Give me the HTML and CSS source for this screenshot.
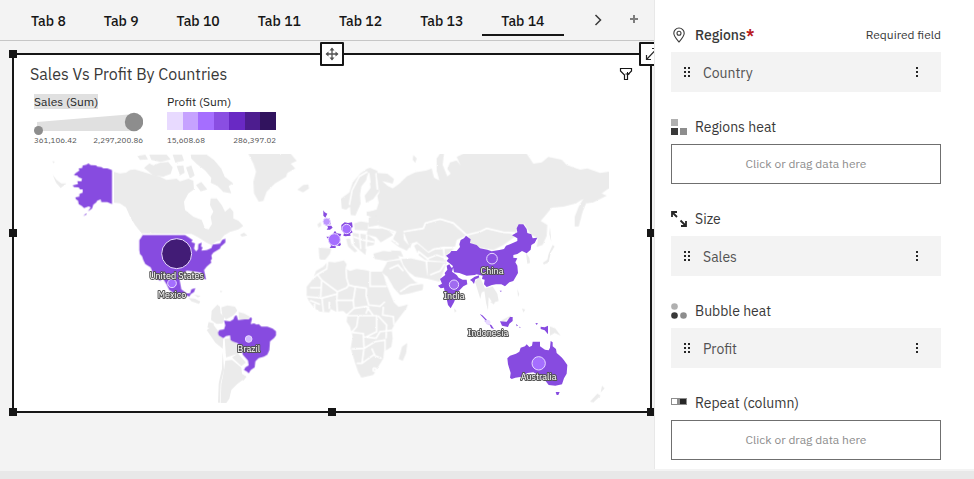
FILE: index.html
```html
<!DOCTYPE html>
<html lang="en">
<head>
<meta charset="utf-8">
<title>Sales Vs Profit By Countries</title>
<link rel="stylesheet" href="styles.css">
</head>
<body>
<main class="workspace">
  <section class="canvas">
    <nav class="tabbar" aria-label="Tabs">
      <div class="tabs">
        <button class="tab">Tab 8</button>
        <button class="tab">Tab 9</button>
        <button class="tab">Tab 10</button>
        <button class="tab">Tab 11</button>
        <button class="tab">Tab 12</button>
        <button class="tab">Tab 13</button>
        <button class="tab tab-active">Tab 14</button>
      </div>
      <button class="tab-icon" aria-label="Next tabs"><svg width="16" height="16" viewBox="0 0 16 16"><path d="M5.500 3l5 5-5 5" fill="none" stroke="#393939" stroke-width="1.500"/></svg></button>
      <button class="tab-icon tab-add" aria-label="Add tab"><svg width="16" height="16" viewBox="0 0 16 16"><path d="M8 4v8M4 8h8" fill="none" stroke="#7d7d7d" stroke-width="2"/></svg></button>
    </nav>

    <article class="widget">
      <button class="grip grip-move" aria-label="Move"><svg width="14" height="14" viewBox="0 0 14 14"><path d="M7 1.500v11M1.500 7h11" stroke="#525252" stroke-width="1.300" fill="none"/><path d="M7 .5L9.500 3.500h-5zM7 13.500l2.500-3h-5zM.5 7l3-2.500v5zM13.500 7l-3-2.500v5z" fill="#525252"/></svg></button>
      <button class="grip grip-expand" aria-label="Expand"><svg width="16" height="16" viewBox="0 0 16 16"><path d="M3.500 9v4.500H8M4 13L13.500 3M9 2.500h5v5" stroke="#262626" stroke-width="1.200" fill="none"/></svg></button>
      <span class="handle handle-tl"></span><span class="handle handle-ml"></span><span class="handle handle-bl"></span>
      <span class="handle handle-bc"></span><span class="handle handle-mr"></span><span class="handle handle-br"></span>

      <header class="widget-head">
        <h1>Sales Vs Profit By Countries</h1>
        <button class="filter" aria-label="Filter"><svg width="14" height="14" viewBox="0 0 14 14"><path d="M1.500 1.500h11v2.500L8.500 8v4.500h-3V8L1.500 4z" fill="none" stroke="#161616" stroke-width="1.200"/><path d="M8.500 5v4M6.500 7h4" stroke="#161616" fill="none"/></svg></button>
      </header>

      <div class="legends">
        <section class="legend">
          <h2><span class="marked">Sales (Sum)</span></h2>
          <svg class="legend-art" viewBox="0 0 109 24" aria-hidden="true"><path d="M3 10L100 2v17H3z" fill="#e0e0e0"/><circle cx="4.500" cy="18.500" r="4.500" fill="#8d8d8d"/><circle cx="100" cy="10" r="9.200" fill="#8d8d8d"/></svg>
          <p class="range"><span>361,106.42</span><span>2,297,200.86</span></p>
        </section>
        <section class="legend">
          <h2>Profit (Sum)</h2>
          <div class="swatches"><i class="s1"></i><i class="s2"></i><i class="s3"></i><i class="s4"></i><i class="s5"></i><i class="s6"></i><i class="s7"></i></div>
          <p class="range"><span>15,608.68</span><span>286,397.02</span></p>
        </section>
      </div>

      <svg class="map" viewBox="60 450 1860 774" role="img" aria-label="World map">
        <defs>
          <filter id="coast" x="0" y="0" width="100%" height="100%"><feTurbulence type="fractalNoise" baseFrequency="0.2" numOctaves="2" seed="4"/><feDisplacementMap in="SourceGraphic" scale="5" xChannelSelector="R" yChannelSelector="G"/></filter>
          <clipPath id="frame"><rect x="60" y="464" width="1766" height="744"/></clipPath>
        </defs>
        <g clip-path="url(#frame)">
        <g class="land" filter="url(#coast)">
          <!-- North and South America -->
          <g transform="translate(60 450)">
            <path d="M282 66L300 70 318 68 330 60 345 58 370 66 390 72 420 80 440 90 470 86 480 94 505 86 520 92 522 118 505 130 492 155 495 180 520 200 545 210 555 235 566 238 576 222 572 200 580 185 570 165 572 145 590 145 605 165 615 185 630 173 640 185 640 205 655 212 670 228 655 238 630 246 612 256 600 272 590 274 575 285 560 278 535 262 515 252 365 250 345 225 330 200 318 172 300 160 282 158z"/>
            <path d="M372 54L388 40 400 46 420 38 445 36 458 52 452 72 430 80 400 76 385 64zM352 18l24-4 8 14-24 2zM388 14h52l12 14-30 8-28-6zM458 14h28l6 18-26 6zM470 48l20-2 4 22-14 8zM498 52l16-6 10 30-14 10z"/>
            <path d="M512 14h48l22 16 22 26 10 24 26 20-14 8 8 22-24-4-18-18-20-10 2-14-18-22-26-20-16-16zM528 105l16-9 18 22-20 6zM660 254l12-6 10 8-16 4z"/>
            <path d="M98 74l12 16 14 10 16 0-18 14-14-16zM96 34l8 0-2 6z"/>
            <path d="M505 444l20 2 16 8-4 8-22-8zM522 434l20 4-8 4zM600 422l8 2-6 3z"/>
            <path d="M575 482L592 464 600 470 602 490 614 500 608 520 590 522 573 510zM604 472L622 466 645 470 652 482 640 496 618 508 606 492zM656 486L672 490 690 500 680 512 656 506zM566 516l16 4-6 16-14-4zM560 540l20-16 12 16 18 20-2 36-22-18zM614 566l24-2 16 24 2 22-38 12zM636 622l18-12 24 28-14 10zM616 632l20-2 28 22 4 38-16 12-18 18-6 26-10 14H602l2-58 8-40zM608 604l4 56-10 40-2 58h-6l2-58 10-44zM664 670l16 10-10 12-10-6z"/>
          </g>
          <!-- Greenland, Iceland, Africa, Iberia -->
          <g transform="translate(600 435)">
            <path d="M145 26H272L290 48 272 56 286 70 262 84 258 96 225 115 200 140 190 168 176 170 162 145 160 110 168 80 160 56zM292 134l18-14 15-2 2 12-18 12z"/>
            <path d="M356 308l38 2-4 16-14 18-14 0-4-4zM352 238l10-8 2 12-8 6z"/>
            <path d="M383 350L405 352 432 346 440 358 436 370 450 378 470 372 500 376 512 380 546 380 552 394 560 420 572 450 582 472 596 486 624 478 618 492 600 515 585 535 575 555 578 580 574 606 552 620 550 640 538 660 520 690 484 698 474 680 464 650 452 610 458 575 450 545 440 530 442 510 430 498 408 500 392 492 388 502 360 500 344 490 328 470 320 455 320 425 340 400 348 378 370 365zM606 605l16-11-4 31-10 23-12-6 6-22z"/>
            <path class="line" d="M383 350l-3 22-28 16-14 14M352 388l13 17-3 50M330 428h32M365 405l47 35 28-12 6-8-6-20-2-28M446 420l14 4 40 6M510 380v44h50M500 430l-2 20 8 30 34 4 15-14M412 440l-2 26h50l6-38M410 466l2 34M320 455l46 4 4 41M366 459l44-12M460 466l2 24-22 20M462 490l38-6 20 28M442 512h33l-5 33-15 17M475 512h55v48l-30 15M455 562l35 4 2 44-37 2M490 575l38 5 12-20 36-4M492 610l33-20 30-5v35M492 610l-6 45h-16M486 655l34-25 25 10M515 610l10 22M534 512l26 28-2 40M550 485l-2 25 32 5 2 25M344 470v22M330 466l30 12M388 470v22M498 506l8-22"/>
            <circle class="line" cx="524" cy="674" r="5"/>
          </g>
          <!-- Europe and Asia -->
          <g transform="translate(900 435)">
            <path d="M122 162L148 142 158 112 180 86 200 72 210 68 232 78 236 140 220 162 198 174 194 152 212 128 204 84 198 106 184 124 180 150 182 176 166 212 152 210 150 185 138 194 125 190z"/>
            <path class="line" d="M148 180l8-44 22-42 24-14M206 84l4 30M228 84l4 50"/>
            <path d="M230 84l32 2 20 16-4 14-32-8 16 14 16 8 20-14 22-22 25-12 35-6 15-6 7 28 16 8-8-28 0-38 14-20 8 6-4 34 14 34 10-8-10-14 8-20 20-6 12 16-12-26 20-10V26H680l20 30 25-4 20-16 40 8 15 16 40 14 22-4 38 14 26-4v50l-21 15 15 7-40 20-22 3-10 25-12 44-12 0 0-29 12-30 14-24-22 14-38 10-35 3-20 25-13 15 20 12-2 33-12 27-18 6 4-26-22-12-20-32-17 5-5 25-40 0-50-12-20 10-40 10-40-34-40-10-45 10-5 15-60 10 2 20 18 20-10 12-25-12-22-17 12-23-25-10-22-7-3-20-30-15-5-10 30-10 6-20-4-20 6-10z"/>
            <path d="M340 30l10 10-4 14-8-10zM162 235l20-6 24 4-4 24-38-2zM206 218l22-4 12 26-34 6zM204 250l56 2 20 18-24 14-14 8-14-16-28-8zM158 264l42 4 24 16-2 16-22 4-4 26-16-14-18-16zM138 282l12-2 4 18 18 20-8 4-20-18zM220 326l30-8 40 4 8 18-40 8-34-6zM200 200l22-2-4 12-18 2z"/>
            <path class="line" d="M160 275l30 10 32 6M178 262l4 50M200 268l-2 44"/>
            <path d="M312 264l56-10 10-18 40-12 40 14 40 34-28 13-5 20-35 0-30 5-15 10-35-30-15 5-5 15-10-25zM342 302l10-6 33 28 20-10 57-4-22 20-2 20-63-5-20-15zM304 342l30-2 42 10 4 30 5 22-40-7-20-15-15-20zM382 350l58 2-12 33-10 25-34-8zM262 350l38-5 12 25 18 25 15 15 25 8-2 17-43 11-25 4-18-20-20-35-17-13zM272 316l30 2 8 18-28-6z"/>
            <path class="line" d="M268 372l26-12 16 18M300 440l30-20 36-6M350 344l6-24 30 24M390 390l30-12 14-22M430 305l4 40M384 340l26-10 30 10"/>
            <path d="M505 266l12-10 43-8 70 16 15 11-35 25-30 15-40-7-30-14z"/>
            <path class="line" d="M238 245l26 8 22 8-10 22 20 16M310 260l60-10 6-16 44-12 40 12 40 36 40-10 20-10 50 12 42 2"/>
          </g>
          <g transform="translate(1290 435)">
            <path d="M135 410l14-16 10 22 8 20-12 6-4 20zM162 430l26-6 14 22 4 22-18 6-12-18-2 40-6-24zM180 470l16-2-4 10zM214 526l28-14 2 6-24 12zM262 432l6 16-4 8zM276 490l10 4-6 8zM338 354l14-10 4-18 12-26 6 4-12 20-6 28-14 6zM360 245l4 46-6-24zM288 324l10 14 2 16-8 2-2-16zM252 448l8 14zM480 770l22-24 10 6-22 20zM516 722l8 8-12 12zM360 544l16 6 16 22-18-8-14 8zM72 490l8 8-6 4z"/>
          </g>
        </g>
        <g class="sold">
          <g transform="translate(60 450)">
            <path d="M276 60L262 55 250 55 244 51 232 50 228 46 212 45 205 40 200 44 188 47 186 54 176 55 178 62 166 70 162 76 172 77 176 82 186 86 184 94 172 93 174 102 158 106 162 111 176 112 180 118 188 118 188 128 178 132 178 140 166 142 168 148 174 152 176 162 186 168 192 174 206 169 212 172 204 184 216 176 220 164 228 158 232 152 242 148 244 156 262 156 276 162zM190 198l8-8 2 3z"/>
            <path d="M368 255H495L506 262 518 270 514 276 525 280 522 296 528 304 534 298 535 282 545 278 543 290 548 292 544 302 560 300 574 294 578 284 600 281 606 270 616 266 616 278 602 290 600 296 580 308 574 316 576 326 572 332 574 338 560 350 552 360 558 388 554 388 544 368 520 364 500 362 488 372 478 386 484 418 500 430 510 430 514 418 526 414 522 426 512 432 508 440 490 432 480 438 460 428 448 420 440 404 428 384 412 372 424 392 418 392 400 372 392 352 376 342 370 330 366 318 360 312 358 300 358 270 364 262z"/>
            <path d="M594 548L598 540 612 538 616 526 612 512 630 514 640 508 644 498 650 496 654 510 674 508 686 508 692 501 696 506 692 522 702 520 710 524 716 522 724 530 742 530 758 536 768 544 768 556 762 564 750 574 748 600 742 614 732 620 716 624 706 634 704 652 692 660 686 670 680 664 672 660 676 652 686 646 684 632 668 614 666 602 656 596 654 580 638 574 632 570 630 556 618 558 610 564 596 556z"/>
          </g>
          <g transform="translate(600 435)">
            <path d="M370 196l4 6 8 4-6 12-6-6zM374 224l14-4 4 18-14 4zM382 242l12 0 4 6-8 6-10 0 4-6zM405 257l5 8 14 2-7 16 6 16-4 4-12-2 0 8-18 0 4-6-6-18-8-10 14 0zM424 240l10-8 10 2 12-2 2 14-6 6 6 10-8 4 2 6-16 2-6-2 2-8-8-10z"/>
          </g>
          <g transform="translate(1290 435)">
            <path d="M48 332L60 324 64 318 80 318 90 306 88 298 92 285 102 280 108 272 122 283 120 294 140 300 150 310 172 314 185 319 208 315 222 312 228 302 240 298 262 288 262 280 246 271 262 262 260 250 266 238 280 238 290 252 292 264 304 268 308 280 322 278 314 294 304 300 302 314 290 325 276 318 262 327 250 330 250 338 262 340 256 352 262 362 264 384 250 408 238 412 225 424 214 418 198 418 186 420 170 426 162 418 164 404 156 402 158 392 140 388 134 390 110 392 88 384 72 382 68 362 50 348 56 340z"/>
            <path d="M58 358L64 368 70 366 66 380 80 390 86 398 98 404 110 404 112 418 100 424 90 434 78 444 78 456 72 472 62 490 54 480 50 462 44 440 42 428 32 430 24 422 36 416 30 402 46 390 44 384 52 374 50 362zM120 405l14-10 14-4-2 8-10 4-4 14-6-8zM149 507l8 4 14 14-3 2zM178 538l6 2 8 12-8-2zM210 529l20 1 10-14 8 0 0 12-10 8-4 10-18-4zM332 545l12 2 10-5v26l-10-12-12-4zM316 534l8 1-4 5zM258 536l6 6-4 2zM209 437l6 0-2 4zM268 545l5 2-5 1z"/>
            <path d="M232 640L240 632 258 626 268 620 272 608 285 604 290 598 298 606 306 602 308 590 330 590 330 604 345 614 356 616 360 608 362 588 368 592 368 604 378 612 380 624 396 638 402 646 412 660 410 686 402 700 396 718 376 722 356 720 345 706 335 700 325 690 310 682 292 684 275 695 256 698 245 702 240 698 242 684 234 658zM377 741h12l-4 9-5 0z"/>
            <path d="M164 524l16 14-4 3-12-12z" fill="#d4bbff"/>
          </g>
        </g>
        </g>
        <g class="bubbles">
          <circle cx="530" cy="761" r="45" fill="#421c76"/>
          <circle cx="516" cy="850" r="13" fill="#a56eff"/>
          <circle cx="746" cy="1017" r="10" fill="#d4bbff"/>
          <circle cx="980" cy="665" r="11" fill="#be95ff"/>
          <circle cx="1040" cy="687" r="14" fill="#a56eff"/>
          <circle cx="1003" cy="719" r="18" fill="#a56eff"/>
          <circle cx="1476" cy="776" r="16" fill="#8a4ee2"/>
          <circle cx="1362" cy="854" r="14" fill="#a06bf0"/>
          <circle cx="1616" cy="1090" r="20" fill="#a56eff"/>
          <circle cx="1464" cy="967" r="6" fill="#e8daff"/>
        </g>
        <g class="names">
          <text x="530" y="837">United States</text>
          <text x="516" y="894">Mexico</text>
          <text x="746" y="1056">Brazil</text>
          <text x="1476" y="822">China</text>
          <text x="1362" y="897">India</text>
          <text x="1464" y="1008">Indonesia</text>
          <text x="1616" y="1140">Australia</text>
        </g>
      </svg>
    </article>
  </section>

  <aside class="panel">
    <section class="slot">
      <h3 class="slot-title required"><svg width="16" height="16" viewBox="0 0 16 16"><path d="M8 1a5.200 5.200 0 0 0-5.200 5.200C2.800 9 5.500 12 8 15c2.500-3 5.200-6 5.200-8.800A5.200 5.200 0 0 0 8 1z" fill="none" stroke="#393939" stroke-width="1.100"/><circle cx="8" cy="6.200" r="2" fill="none" stroke="#393939" stroke-width="1.100"/></svg><span>Regions<b>*</b></span><small>Required field</small></h3>
      <div class="item"><svg class="drag" width="8" height="12" viewBox="0 0 8 12"><path d="M1 1h2v2H1zM5 1h2v2H5zM1 5h2v2H1zM5 5h2v2H5zM1 9h2v2H1zM5 9h2v2H5z"/></svg><span>Country</span><button class="more" aria-label="More options for Country"><svg width="8" height="12" viewBox="0 0 8 12"><path d="M3 1h2v2H3zM3 5h2v2H3zM3 9h2v2H3z"/></svg></button></div>
    </section>
    <section class="slot">
      <h3 class="slot-title"><svg width="16" height="16" viewBox="0 0 16 16"><path d="M0 0h7v7H0z" fill="#b0b0b0"/><path d="M0 9h7v7H0z" fill="#393939"/><path d="M9 9h7v7H9z" fill="#8d8d8d"/></svg><span>Regions heat</span></h3>
      <button class="drop">Click or drag data here</button>
    </section>
    <section class="slot">
      <h3 class="slot-title"><svg width="16" height="16" viewBox="0 0 16 16"><path d="M1 6V1h5M1 1l5 5M15 10v5h-5M15 15L9.500 9.500" fill="none" stroke="#262626" stroke-width="1.800"/></svg><span>Size</span></h3>
      <div class="item"><svg class="drag" width="8" height="12" viewBox="0 0 8 12"><path d="M1 1h2v2H1zM5 1h2v2H5zM1 5h2v2H1zM5 5h2v2H5zM1 9h2v2H1zM5 9h2v2H5z"/></svg><span>Sales</span><button class="more" aria-label="More options for Sales"><svg width="8" height="12" viewBox="0 0 8 12"><path d="M3 1h2v2H3zM3 5h2v2H3zM3 9h2v2H3z"/></svg></button></div>
    </section>
    <section class="slot">
      <h3 class="slot-title"><svg width="16" height="16" viewBox="0 0 16 16"><circle cx="3.500" cy="3.500" r="3.300" fill="#b0b0b0"/><circle cx="3.500" cy="12.500" r="3.300" fill="#393939"/><circle cx="12.500" cy="12.500" r="3.300" fill="#8d8d8d"/></svg><span>Bubble heat</span></h3>
      <div class="item"><svg class="drag" width="8" height="12" viewBox="0 0 8 12"><path d="M1 1h2v2H1zM5 1h2v2H5zM1 5h2v2H1zM5 5h2v2H5zM1 9h2v2H1zM5 9h2v2H5z"/></svg><span>Profit</span><button class="more" aria-label="More options for Profit"><svg width="8" height="12" viewBox="0 0 8 12"><path d="M3 1h2v2H3zM3 5h2v2H3zM3 9h2v2H3z"/></svg></button></div>
    </section>
    <section class="slot">
      <h3 class="slot-title"><svg width="16" height="16" viewBox="0 0 16 16"><path d="M0 3h16v7H0z" fill="#8d8d8d"/><path d="M1 4h5v5H1z" fill="#fff"/><path d="M9 4h6v5H9z" fill="#262626"/></svg><span>Repeat (column)</span></h3>
      <button class="drop">Click or drag data here</button>
    </section>
  </aside>
</main>
<footer class="strip"></footer>
</body>
</html>
```
FILE: styles.css
```css
* { box-sizing: border-box; margin: 0; padding: 0; }

body {
  display: flex;
  flex-direction: column;
  min-height: 100vh;
  background: #f3f3f3;
  color: #393939;
  font: 14px/20px "IBM Plex Sans", Roboto, sans-serif;
}

button { background: none; border: 0; color: inherit; font: inherit; }
svg { display: block; flex: none; }

.workspace { display: flex; flex: 1; }
.canvas { flex: 1; min-width: 0; overflow: hidden; }

/* Tab strip */
.tabbar {
  display: flex;
  align-items: center;
  height: 41px;
  padding-left: 12px;
  border-bottom: 1px solid #c6c6c6;
}
.tabs { display: flex; flex: 1; min-width: 0; overflow: hidden; }
.tab {
  height: 36px;
  margin-bottom: 4px;
  padding: 8px 19px 0;
  border-bottom: 2px solid transparent;
  color: #161616;
  font-weight: 500;
  white-space: nowrap;
}
.tab-active { border-color: #161616; }
.tab-icon { padding: 0 4px; }
.tab-add { margin: 0 8px 2px 12px; }

/* Selected widget */
.widget {
  position: relative;
  margin: 12px 2px 0 12px;
  padding-bottom: 3px;
  border: 2px solid #161616;
  background: #fff;
}
.handle { position: absolute; width: 8px; height: 8px; background: #161616; }
.handle-tl { top: -5px; left: -5px; }
.handle-ml { top: calc(50% - 4px); left: -5px; }
.handle-bl { bottom: -5px; left: -5px; }
.handle-bc { bottom: -5px; left: calc(50% - 4px); }
.handle-mr { top: calc(50% - 4px); right: -5px; }
.handle-br { bottom: -5px; right: -5px; }
.grip {
  position: absolute;
  top: -13px;
  display: grid;
  place-items: center;
  width: 24px;
  height: 24px;
  border: 2px solid #161616;
  border-radius: 1px;
  background: #fff;
}
.grip-move { left: calc(50% - 12px); }
.grip-expand { right: -13px; }

.widget-head {
  display: flex;
  align-items: center;
  justify-content: space-between;
  height: 37px;
  padding: 0 17px 0 16px;
}
.widget-head h1 { font-size: 16px; font-weight: 400; }

.legends { display: flex; gap: 24px; padding: 2px 20px 0; }
.legend { width: 109px; }
.legend h2 { height: 18px; font-size: 12px; line-height: 15px; font-weight: 400; color: #262626; }
.marked { display: inline-block; background: #e0e0e0; }
.legend-art { width: 100%; height: 24px; }
.swatches { display: flex; height: 18px; margin-bottom: 6px; }
.swatches i { flex: 1; }
.s1 { background: #e8daff; }
.s2 { background: #c6a2ff; }
.s3 { background: #a56eff; }
.s4 { background: #8a4ee2; }
.s5 { background: #6929c4; }
.s6 { background: #4d1d8f; }
.s7 { background: #31135e; }
.range { display: flex; justify-content: space-between; font-size: 8px; line-height: 8px; color: #525252; }

/* Map */
.map { width: calc(100% - 16px); margin: 6px 0 0 6px; }
.land { fill: #ebebeb; }
.land .line { fill: none; stroke: #fff; stroke-width: 5; }
.sold { fill: #874be0; }
.bubbles { stroke: #e8daff; stroke-width: 3; }
.names {
  fill: #fff;
  stroke: #525252;
  stroke-width: 6px;
  stroke-linejoin: round;
  paint-order: stroke;
  font-size: 27px;
  text-anchor: middle;
}

/* Data slots */
.panel {
  display: flex;
  flex-direction: column;
  gap: 18px;
  width: 320px;
  margin-bottom: 2px;
  padding: 18px 33px 9px 16px;
  border-left: 1px solid #e8e8e8;
  background: #fff;
}
.slot-title { display: flex; align-items: center; gap: 8px; height: 34px; font-size: 14px; font-weight: 400; }
.required { font-weight: 500; }
.required b { color: #b81921; }
.required small { margin-left: auto; font-size: 12px; font-weight: 400; }
.item { display: flex; align-items: center; height: 40px; padding: 0 20px 0 12px; background: #f3f3f3; }
.item svg { fill: #262626; }
.item span { padding: 2px 0 0 12px; color: #525252; }
.more { margin-left: auto; }
.drop { width: 100%; height: 40px; border: 1px solid #6f6f6f; font-size: 12px; color: #8d8d8d; }

.strip { height: 8px; background: #e8e8e8; }
```
